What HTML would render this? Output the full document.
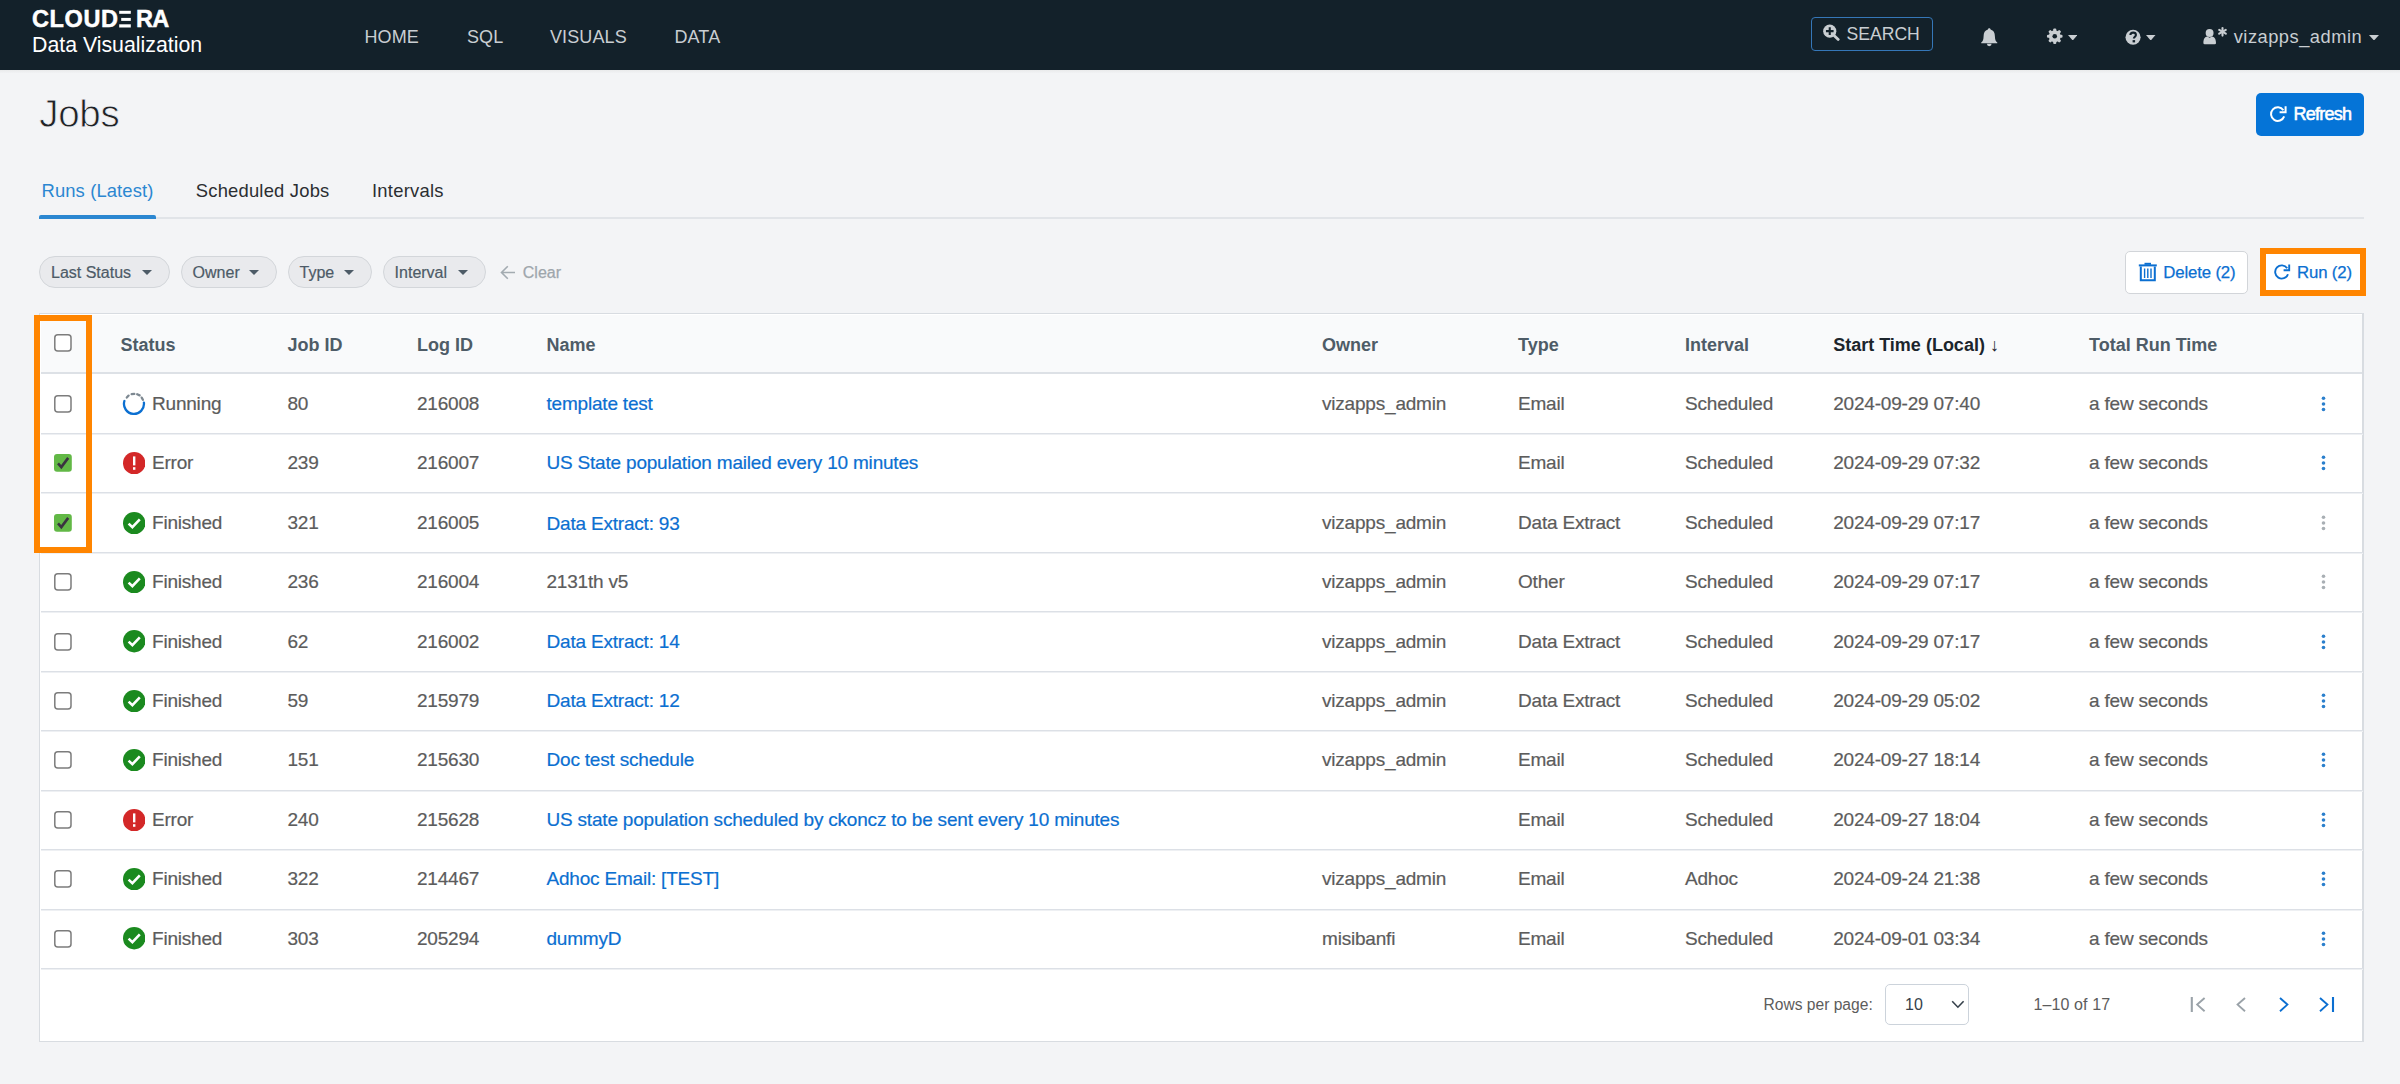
<!DOCTYPE html>
<html><head><meta charset="utf-8"><title>Jobs</title>
<style>
html,body{margin:0;padding:0;}
body{width:2400px;height:1084px;position:relative;overflow:hidden;background:#f3f4f6;font-family:"Liberation Sans", sans-serif;}
.t{position:absolute;white-space:nowrap;line-height:1;}
svg{display:block}
</style></head><body>
<div style="position:absolute;left:0px;top:0px;width:2400px;height:70px;background:#13212a"></div>
<div style="position:absolute;left:0px;top:70px;width:2400px;height:3px;background:linear-gradient(#e9eaeb,#f1f2f4)"></div>
<div class="t" style="left:32.00px;top:7.61px;font-size:23.5px;color:#ffffff;font-weight:700;letter-spacing:0.6px;-webkit-text-stroke:0.5px #fff;">CLOUD</div>
<svg style="position:absolute;left:118px;top:10px" width="14" height="18" viewBox="0 0 14 18"><rect x="1.2" y="0.8" width="11.6" height="3" fill="#fff"/><rect x="3.2" y="7.9" width="9.6" height="3" fill="#fff"/><rect x="1.2" y="14.3" width="11.6" height="3.2" fill="#fff"/></svg>
<div class="t" style="left:136.00px;top:7.61px;font-size:23.5px;color:#ffffff;font-weight:700;letter-spacing:-0.6px;-webkit-text-stroke:0.5px #fff;">RA</div>
<div class="t" style="left:32.00px;top:35.27px;font-size:21.3px;color:#ffffff;font-weight:400;letter-spacing:0px;">Data Visualization</div>
<div class="t" style="left:364.50px;top:28.06px;font-size:18px;color:#c9ced2;font-weight:400;letter-spacing:0.1px;">HOME</div>
<div class="t" style="left:467.00px;top:28.06px;font-size:18px;color:#c9ced2;font-weight:400;letter-spacing:0.1px;">SQL</div>
<div class="t" style="left:550.00px;top:28.06px;font-size:18px;color:#c9ced2;font-weight:400;letter-spacing:0.1px;">VISUALS</div>
<div class="t" style="left:674.50px;top:28.06px;font-size:18px;color:#c9ced2;font-weight:400;letter-spacing:0.1px;">DATA</div>
<div style="position:absolute;left:1811px;top:17px;width:122px;height:34px;box-sizing:border-box;border:1.7px solid #3577b8;border-radius:4px"></div>
<svg style="position:absolute;left:1822px;top:24px" width="19" height="17" viewBox="0 0 19 17"><circle cx="7.75" cy="7.15" r="6.6" fill="#c9ced2"/><path d="M11.8 11.2 L16.2 15.4" stroke="#c9ced2" stroke-width="2.8" stroke-linecap="round"/><path d="M7.75 3.3 V11 M3.95 7.15 H11.6" stroke="#13212a" stroke-width="2.1"/></svg>
<div class="t" style="left:1846.50px;top:26.10px;font-size:17.6px;color:#c9ced2;font-weight:400;letter-spacing:0px;">SEARCH</div>
<svg style="position:absolute;left:1980px;top:27px" width="19" height="20" viewBox="0 0 19 20"><path d="M9.25 1.2 C10.2 1.2 10.6 1.9 10.6 2.6 C13.6 3.3 14.8 6 14.9 9.2 C15 12.5 15.6 14.2 17.3 15.6 L17.3 16.3 L1.2 16.3 L1.2 15.6 C2.9 14.2 3.5 12.5 3.6 9.2 C3.7 6 4.9 3.3 7.9 2.6 C7.9 1.9 8.3 1.2 9.25 1.2 Z" fill="#c9ced2"/><path d="M6.9 16.8 A2.35 2.35 0 0 0 11.6 16.8 Z" fill="#c9ced2"/></svg>
<svg style="position:absolute;left:2046px;top:28px" width="18" height="17" viewBox="0 0 18 17"><g transform="translate(8.75,8.25)" fill="#c9ced2"><rect x="-1.55" y="-7.8" width="3.1" height="4" rx="1.1" transform="rotate(0)"/><rect x="-1.55" y="-7.8" width="3.1" height="4" rx="1.1" transform="rotate(45)"/><rect x="-1.55" y="-7.8" width="3.1" height="4" rx="1.1" transform="rotate(90)"/><rect x="-1.55" y="-7.8" width="3.1" height="4" rx="1.1" transform="rotate(135)"/><rect x="-1.55" y="-7.8" width="3.1" height="4" rx="1.1" transform="rotate(180)"/><rect x="-1.55" y="-7.8" width="3.1" height="4" rx="1.1" transform="rotate(225)"/><rect x="-1.55" y="-7.8" width="3.1" height="4" rx="1.1" transform="rotate(270)"/><rect x="-1.55" y="-7.8" width="3.1" height="4" rx="1.1" transform="rotate(315)"/><circle r="5.9"/><circle r="2.3" fill="#13212a"/></g></svg>
<svg style="position:absolute;left:2067.5px;top:34.5px" width="9.5" height="5.5" viewBox="0 0 9.5 5.5"><path d="M0 0 H9.5 L4.75 5.5 Z" fill="#c9ced2"/></svg>
<svg style="position:absolute;left:2125px;top:28.5px" width="17" height="17" viewBox="0 0 17 17"><circle cx="8.05" cy="8.25" r="7.55" fill="#c9ced2"/><path d="M5.4 6.1 C5.4 4.5 6.5 3.6 8.2 3.6 C9.9 3.6 10.9 4.6 10.9 5.9 C10.9 7.7 8.9 7.8 8.9 9.6" stroke="#13212a" stroke-width="2.1" fill="none"/><rect x="7.6" y="11.1" width="2.5" height="2.3" fill="#13212a"/></svg>
<svg style="position:absolute;left:2146.2px;top:34.5px" width="9.5" height="5.5" viewBox="0 0 9.5 5.5"><path d="M0 0 H9.5 L4.75 5.5 Z" fill="#c9ced2"/></svg>
<svg style="position:absolute;left:2202px;top:26px" width="27" height="20" viewBox="0 0 27 20"><circle cx="7.6" cy="7" r="3.95" fill="#c9ced2"/><path d="M1.4 17 C1.4 12.6 3 10.8 5.3 10.5 L7.6 11.7 L9.9 10.5 C12.2 10.8 14 12.6 14 17 Q14 18.3 12.7 18.3 L2.7 18.3 Q1.4 18.3 1.4 17 Z" fill="#c9ced2"/><g transform="translate(20.5,5.8)" stroke="#c9ced2" stroke-width="2.1" stroke-linecap="round"><path d="M0 -3.8 V3.8"/><path d="M-3.3 -1.9 L3.3 1.9"/><path d="M-3.3 1.9 L3.3 -1.9"/></g></svg>
<div class="t" style="left:2233.70px;top:27.51px;font-size:18.3px;color:#c9ced2;font-weight:400;letter-spacing:0.5px;">vizapps_admin</div>
<svg style="position:absolute;left:2368.5px;top:34.5px" width="10" height="5.5" viewBox="0 0 10 5.5"><path d="M0 0 H10 L5.0 5.5 Z" fill="#c9ced2"/></svg>
<div class="t" style="left:39.30px;top:95.21px;font-size:38.5px;color:#1f2226;font-weight:400;letter-spacing:-0.3px;-webkit-text-stroke:0.8px #f3f4f6;">Jobs</div>
<div style="position:absolute;left:2255.5px;top:92.5px;width:108.5px;height:43.5px;background:#0574d7;border-radius:5px"></div>
<svg style="position:absolute;left:2269px;top:105px" width="19" height="19" viewBox="0 0 19 19"><path d="M15.2 11.4 A6.8 6.8 0 1 1 14.4 5.2" stroke="#fff" stroke-width="2" fill="none"/><path d="M16.6 1.2 V7.2 H10.6" stroke="#fff" stroke-width="2" fill="none"/></svg>
<div class="t" style="left:2293.50px;top:104.76px;font-size:18px;color:#ffffff;font-weight:400;letter-spacing:-0.75px;-webkit-text-stroke:0.55px #fff;">Refresh</div>
<div class="t" style="left:41.50px;top:181.62px;font-size:18.4px;color:#2b87d1;font-weight:400;letter-spacing:0.12px;">Runs (Latest)</div>
<div class="t" style="left:195.80px;top:181.62px;font-size:18.4px;color:#2b2e31;font-weight:400;letter-spacing:0.2px;">Scheduled Jobs</div>
<div class="t" style="left:372.00px;top:181.62px;font-size:18.4px;color:#2b2e31;font-weight:400;letter-spacing:0.25px;">Intervals</div>
<div style="position:absolute;left:39px;top:217px;width:2325px;height:2px;background:#e1e4e8"></div>
<div style="position:absolute;left:39px;top:214.7px;width:117px;height:4.2px;background:#2b87d1;border-radius:2px 2px 0 0"></div>
<div style="position:absolute;left:39.2px;top:256.4px;width:130.6px;height:32px;box-sizing:border-box;background:#e9eaed;border:1.2px solid #d3d6da;border-radius:16px"></div>
<div class="t" style="left:51.00px;top:264.76px;font-size:16px;color:#4d5b67;font-weight:400;letter-spacing:0px;-webkit-text-stroke:0.2px #4d5b67;">Last Status</div>
<svg style="position:absolute;left:142.0px;top:270px" width="10" height="5" viewBox="0 0 10 5"><path d="M0 0 H10 L5.0 5 Z" fill="#4d5b67"/></svg>
<div style="position:absolute;left:181.1px;top:256.4px;width:95.9px;height:32px;box-sizing:border-box;background:#e9eaed;border:1.2px solid #d3d6da;border-radius:16px"></div>
<div class="t" style="left:192.60px;top:264.76px;font-size:16px;color:#4d5b67;font-weight:400;letter-spacing:0px;-webkit-text-stroke:0.2px #4d5b67;">Owner</div>
<svg style="position:absolute;left:248.70000000000002px;top:270px" width="10" height="5" viewBox="0 0 10 5"><path d="M0 0 H10 L5.0 5 Z" fill="#4d5b67"/></svg>
<div style="position:absolute;left:288.1px;top:256.4px;width:83.8px;height:32px;box-sizing:border-box;background:#e9eaed;border:1.2px solid #d3d6da;border-radius:16px"></div>
<div class="t" style="left:299.50px;top:264.76px;font-size:16px;color:#4d5b67;font-weight:400;letter-spacing:0px;-webkit-text-stroke:0.2px #4d5b67;">Type</div>
<svg style="position:absolute;left:343.7px;top:270px" width="10" height="5" viewBox="0 0 10 5"><path d="M0 0 H10 L5.0 5 Z" fill="#4d5b67"/></svg>
<div style="position:absolute;left:383.1px;top:256.4px;width:102.5px;height:32px;box-sizing:border-box;background:#e9eaed;border:1.2px solid #d3d6da;border-radius:16px"></div>
<div class="t" style="left:394.60px;top:264.76px;font-size:16px;color:#4d5b67;font-weight:400;letter-spacing:0px;-webkit-text-stroke:0.2px #4d5b67;">Interval</div>
<svg style="position:absolute;left:457.8px;top:270px" width="10" height="5" viewBox="0 0 10 5"><path d="M0 0 H10 L5.0 5 Z" fill="#4d5b67"/></svg>
<svg style="position:absolute;left:500px;top:265px" width="16" height="15" viewBox="0 0 16 15"><path d="M15 7.5 H1.8 M7.8 1.3 L1.5 7.5 L7.8 13.7" stroke="#a3abb1" stroke-width="1.6" fill="none"/></svg>
<div class="t" style="left:522.80px;top:264.76px;font-size:16px;color:#9ea6ac;font-weight:400;letter-spacing:0px;-webkit-text-stroke:0.25px #9ea6ac;">Clear</div>
<div style="position:absolute;left:2125.3px;top:251.4px;width:122.4px;height:42.6px;box-sizing:border-box;background:#fff;border:1.2px solid #d2d5d9;border-radius:5px"></div>
<svg style="position:absolute;left:2138px;top:262px" width="20" height="20" viewBox="0 0 20 20"><rect x="0.8" y="2.4" width="18" height="2" fill="#0b6fd1"/><rect x="6.5" y="0.8" width="6.5" height="2" fill="#0b6fd1"/><path d="M2.8 4.4 V18.2 H16.8 V4.4" stroke="#0b6fd1" stroke-width="2" fill="none"/><path d="M6.6 6.5 V16 M9.8 6.5 V16 M13 6.5 V16" stroke="#0b6fd1" stroke-width="1.4"/></svg>
<div class="t" style="left:2163.30px;top:265.28px;font-size:16.8px;color:#0b6fd1;font-weight:400;letter-spacing:-0.15px;-webkit-text-stroke:0.25px #0b6fd1;">Delete (2)</div>
<div style="position:absolute;left:2259.6px;top:251.4px;width:105px;height:42px;box-sizing:border-box;background:#fff;border:1.2px solid #d2d5d9;border-radius:5px"></div>
<svg style="position:absolute;left:2272.5px;top:263px" width="19" height="19" viewBox="0 0 19 19"><path d="M15 11.2 A6.6 6.6 0 1 1 14.2 5.2" stroke="#0b6fd1" stroke-width="1.9" fill="none"/><path d="M16.2 1.6 V7.2 H10.6" stroke="#0b6fd1" stroke-width="1.9" fill="none"/></svg>
<div class="t" style="left:2297.00px;top:265.28px;font-size:16.8px;color:#0b6fd1;font-weight:400;letter-spacing:-0.15px;-webkit-text-stroke:0.25px #0b6fd1;">Run (2)</div>
<div style="position:absolute;left:2260.2px;top:247.8px;width:105.9px;height:48.3px;box-sizing:border-box;border:6px solid #ff8500"></div>
<div style="position:absolute;left:39px;top:313px;width:2325px;height:729px;box-sizing:border-box;background:#fff;border:1.5px solid #d8dce1"></div>
<div style="position:absolute;left:40.5px;top:314.5px;width:2322px;height:58.5px;background:#f9fafb"></div>
<div style="position:absolute;left:40.5px;top:372.3px;width:2322px;height:2.1px;background:#dde1e6"></div>
<div style="position:absolute;left:2362px;top:313px;width:2px;height:729px;background:#d8dce1"></div>
<div style="position:absolute;left:40.5px;top:433px;width:2322px;height:1px;background:#dce0e6"></div>
<div style="position:absolute;left:40.5px;top:434px;width:2322px;height:0.6px;background:#eef0f3"></div>
<div style="position:absolute;left:40.5px;top:492px;width:2322px;height:1px;background:#dce0e6"></div>
<div style="position:absolute;left:40.5px;top:493px;width:2322px;height:0.6px;background:#eef0f3"></div>
<div style="position:absolute;left:40.5px;top:552px;width:2322px;height:1px;background:#dce0e6"></div>
<div style="position:absolute;left:40.5px;top:553px;width:2322px;height:0.6px;background:#eef0f3"></div>
<div style="position:absolute;left:40.5px;top:611px;width:2322px;height:1px;background:#dce0e6"></div>
<div style="position:absolute;left:40.5px;top:612px;width:2322px;height:0.6px;background:#eef0f3"></div>
<div style="position:absolute;left:40.5px;top:671px;width:2322px;height:1px;background:#dce0e6"></div>
<div style="position:absolute;left:40.5px;top:672px;width:2322px;height:0.6px;background:#eef0f3"></div>
<div style="position:absolute;left:40.5px;top:730px;width:2322px;height:1px;background:#dce0e6"></div>
<div style="position:absolute;left:40.5px;top:731px;width:2322px;height:0.6px;background:#eef0f3"></div>
<div style="position:absolute;left:40.5px;top:790px;width:2322px;height:1px;background:#dce0e6"></div>
<div style="position:absolute;left:40.5px;top:791px;width:2322px;height:0.6px;background:#eef0f3"></div>
<div style="position:absolute;left:40.5px;top:849px;width:2322px;height:1px;background:#dce0e6"></div>
<div style="position:absolute;left:40.5px;top:850px;width:2322px;height:0.6px;background:#eef0f3"></div>
<div style="position:absolute;left:40.5px;top:909px;width:2322px;height:1px;background:#dce0e6"></div>
<div style="position:absolute;left:40.5px;top:910px;width:2322px;height:0.6px;background:#eef0f3"></div>
<div style="position:absolute;left:40.5px;top:968px;width:2322px;height:1px;background:#dce0e6"></div>
<div style="position:absolute;left:40.5px;top:969px;width:2322px;height:0.6px;background:#eef0f3"></div>
<svg style="position:absolute;left:54.2px;top:334.2px" width="18" height="18" viewBox="0 0 18 18"><rect x="0.8" y="0.8" width="16.2" height="16.2" rx="3" fill="#fff" stroke="#7c7c7c" stroke-width="1.5"/></svg>
<div class="t" style="left:120.50px;top:336.36px;font-size:18px;color:#4e5c67;font-weight:700;letter-spacing:0px;">Status</div>
<div class="t" style="left:287.50px;top:336.36px;font-size:18px;color:#4e5c67;font-weight:700;letter-spacing:0px;">Job ID</div>
<div class="t" style="left:417.00px;top:336.36px;font-size:18px;color:#4e5c67;font-weight:700;letter-spacing:0px;">Log ID</div>
<div class="t" style="left:546.50px;top:336.36px;font-size:18px;color:#4e5c67;font-weight:700;letter-spacing:0px;">Name</div>
<div class="t" style="left:1322.00px;top:336.36px;font-size:18px;color:#4e5c67;font-weight:700;letter-spacing:0px;">Owner</div>
<div class="t" style="left:1518.00px;top:336.36px;font-size:18px;color:#4e5c67;font-weight:700;letter-spacing:0px;">Type</div>
<div class="t" style="left:1685.00px;top:336.36px;font-size:18px;color:#4e5c67;font-weight:700;letter-spacing:0px;">Interval</div>
<div class="t" style="left:1833.20px;top:336.36px;font-size:18px;color:#1c252c;font-weight:700;letter-spacing:0px;">Start Time (Local) ↓</div>
<div class="t" style="left:2089.00px;top:336.36px;font-size:18px;color:#4e5c67;font-weight:700;letter-spacing:0px;">Total Run Time</div>
<svg style="position:absolute;left:54.2px;top:395.0px" width="18" height="18" viewBox="0 0 18 18"><rect x="0.8" y="0.8" width="16.2" height="16.2" rx="3" fill="#fff" stroke="#7c7c7c" stroke-width="1.5"/></svg>
<svg style="position:absolute;left:122px;top:391.9px" width="24" height="24" viewBox="0 0 24 24"><path d="M2.4 9.0 A10 10 0 1 0 21.9 10.7" stroke="#0b6fd1" stroke-width="2.3" fill="none" stroke-linecap="round"/><path d="M4.8 5.6 L6.6 3.6 M9.6 2.2 L12.3 1.8 M15.2 2.3 L17.6 3.4 M19.7 5.6 L20.9 7.7" stroke="#7d8891" stroke-width="2.3" stroke-linecap="round"/></svg>
<div class="t" style="left:152.00px;top:393.92px;font-size:19px;color:#5c5c5c;font-weight:400;letter-spacing:-0.2px;-webkit-text-stroke:0.2px #5c5c5c;">Running</div>
<div class="t" style="left:287.50px;top:393.92px;font-size:19px;color:#5c5c5c;font-weight:400;letter-spacing:-0.2px;-webkit-text-stroke:0.2px #5c5c5c;">80</div>
<div class="t" style="left:417.00px;top:393.92px;font-size:19px;color:#5c5c5c;font-weight:400;letter-spacing:-0.2px;-webkit-text-stroke:0.2px #5c5c5c;">216008</div>
<div class="t" style="left:546.50px;top:393.92px;font-size:19px;color:#0b6fd1;font-weight:400;letter-spacing:-0.2px;-webkit-text-stroke:0.2px #0b6fd1;">template test</div>
<div class="t" style="left:1322.00px;top:393.92px;font-size:19px;color:#5c5c5c;font-weight:400;letter-spacing:-0.2px;-webkit-text-stroke:0.2px #5c5c5c;">vizapps_admin</div>
<div class="t" style="left:1518.00px;top:393.92px;font-size:19px;color:#5c5c5c;font-weight:400;letter-spacing:-0.2px;-webkit-text-stroke:0.2px #5c5c5c;">Email</div>
<div class="t" style="left:1685.00px;top:393.92px;font-size:19px;color:#5c5c5c;font-weight:400;letter-spacing:-0.2px;-webkit-text-stroke:0.2px #5c5c5c;">Scheduled</div>
<div class="t" style="left:1833.20px;top:393.92px;font-size:19px;color:#5c5c5c;font-weight:400;letter-spacing:-0.2px;-webkit-text-stroke:0.2px #5c5c5c;">2024-09-29 07:40</div>
<div class="t" style="left:2089.00px;top:393.92px;font-size:19px;color:#5c5c5c;font-weight:400;letter-spacing:-0.2px;-webkit-text-stroke:0.2px #5c5c5c;">a few seconds</div>
<svg style="position:absolute;left:2321px;top:395.9px" width="5" height="16" viewBox="0 0 5 16"><circle cx="2.5" cy="2.2" r="1.8" fill="#2a7fcc"/><circle cx="2.5" cy="8" r="1.8" fill="#2a7fcc"/><circle cx="2.5" cy="13.5" r="1.8" fill="#2a7fcc"/></svg>
<svg style="position:absolute;left:54.2px;top:454.4px" width="18" height="18" viewBox="0 0 18 18"><rect x="0" y="0" width="17.8" height="17.8" rx="3" fill="#62b846"/><path d="M4 9.4 L7.3 13.1 L14.2 3.9" stroke="#3a3340" stroke-width="2.6" fill="none"/></svg>
<svg style="position:absolute;left:122.8px;top:452.1px" width="22.4" height="22.4" viewBox="0 0 22.4 22.4"><circle cx="11.2" cy="11.2" r="11.2" fill="#d32828"/><rect x="10" y="4.4" width="2.4" height="9" fill="#fff"/><rect x="10" y="15.2" width="2.4" height="2.6" fill="#fff"/></svg>
<div class="t" style="left:152.00px;top:453.32px;font-size:19px;color:#5c5c5c;font-weight:400;letter-spacing:-0.2px;-webkit-text-stroke:0.2px #5c5c5c;">Error</div>
<div class="t" style="left:287.50px;top:453.32px;font-size:19px;color:#5c5c5c;font-weight:400;letter-spacing:-0.2px;-webkit-text-stroke:0.2px #5c5c5c;">239</div>
<div class="t" style="left:417.00px;top:453.32px;font-size:19px;color:#5c5c5c;font-weight:400;letter-spacing:-0.2px;-webkit-text-stroke:0.2px #5c5c5c;">216007</div>
<div class="t" style="left:546.50px;top:453.32px;font-size:19px;color:#0b6fd1;font-weight:400;letter-spacing:-0.2px;-webkit-text-stroke:0.2px #0b6fd1;">US State population mailed every 10 minutes</div>
<div class="t" style="left:1518.00px;top:453.32px;font-size:19px;color:#5c5c5c;font-weight:400;letter-spacing:-0.2px;-webkit-text-stroke:0.2px #5c5c5c;">Email</div>
<div class="t" style="left:1685.00px;top:453.32px;font-size:19px;color:#5c5c5c;font-weight:400;letter-spacing:-0.2px;-webkit-text-stroke:0.2px #5c5c5c;">Scheduled</div>
<div class="t" style="left:1833.20px;top:453.32px;font-size:19px;color:#5c5c5c;font-weight:400;letter-spacing:-0.2px;-webkit-text-stroke:0.2px #5c5c5c;">2024-09-29 07:32</div>
<div class="t" style="left:2089.00px;top:453.32px;font-size:19px;color:#5c5c5c;font-weight:400;letter-spacing:-0.2px;-webkit-text-stroke:0.2px #5c5c5c;">a few seconds</div>
<svg style="position:absolute;left:2321px;top:455.3px" width="5" height="16" viewBox="0 0 5 16"><circle cx="2.5" cy="2.2" r="1.8" fill="#2a7fcc"/><circle cx="2.5" cy="8" r="1.8" fill="#2a7fcc"/><circle cx="2.5" cy="13.5" r="1.8" fill="#2a7fcc"/></svg>
<svg style="position:absolute;left:54.2px;top:513.8px" width="18" height="18" viewBox="0 0 18 18"><rect x="0" y="0" width="17.8" height="17.8" rx="3" fill="#62b846"/><path d="M4 9.4 L7.3 13.1 L14.2 3.9" stroke="#3a3340" stroke-width="2.6" fill="none"/></svg>
<svg style="position:absolute;left:122.8px;top:511.5px" width="22.4" height="22.4" viewBox="0 0 22.4 22.4"><circle cx="11.2" cy="11.2" r="11.2" fill="#1b8a1f"/><path d="M5.6 11.6 L9.4 15.2 L16.8 7.4" stroke="#fff" stroke-width="2.6" fill="none"/></svg>
<div class="t" style="left:152.00px;top:512.72px;font-size:19px;color:#5c5c5c;font-weight:400;letter-spacing:-0.2px;-webkit-text-stroke:0.2px #5c5c5c;">Finished</div>
<div class="t" style="left:287.50px;top:512.72px;font-size:19px;color:#5c5c5c;font-weight:400;letter-spacing:-0.2px;-webkit-text-stroke:0.2px #5c5c5c;">321</div>
<div class="t" style="left:417.00px;top:512.72px;font-size:19px;color:#5c5c5c;font-weight:400;letter-spacing:-0.2px;-webkit-text-stroke:0.2px #5c5c5c;">216005</div>
<div class="t" style="left:546.50px;top:513.52px;font-size:19px;color:#0b6fd1;font-weight:400;letter-spacing:-0.2px;-webkit-text-stroke:0.2px #0b6fd1;">Data Extract: 93</div>
<div class="t" style="left:1322.00px;top:512.72px;font-size:19px;color:#5c5c5c;font-weight:400;letter-spacing:-0.2px;-webkit-text-stroke:0.2px #5c5c5c;">vizapps_admin</div>
<div class="t" style="left:1518.00px;top:512.72px;font-size:19px;color:#5c5c5c;font-weight:400;letter-spacing:-0.2px;-webkit-text-stroke:0.2px #5c5c5c;">Data Extract</div>
<div class="t" style="left:1685.00px;top:512.72px;font-size:19px;color:#5c5c5c;font-weight:400;letter-spacing:-0.2px;-webkit-text-stroke:0.2px #5c5c5c;">Scheduled</div>
<div class="t" style="left:1833.20px;top:512.72px;font-size:19px;color:#5c5c5c;font-weight:400;letter-spacing:-0.2px;-webkit-text-stroke:0.2px #5c5c5c;">2024-09-29 07:17</div>
<div class="t" style="left:2089.00px;top:512.72px;font-size:19px;color:#5c5c5c;font-weight:400;letter-spacing:-0.2px;-webkit-text-stroke:0.2px #5c5c5c;">a few seconds</div>
<svg style="position:absolute;left:2321px;top:514.7px" width="5" height="16" viewBox="0 0 5 16"><circle cx="2.5" cy="2.2" r="1.8" fill="#a9afb4"/><circle cx="2.5" cy="8" r="1.8" fill="#a9afb4"/><circle cx="2.5" cy="13.5" r="1.8" fill="#a9afb4"/></svg>
<svg style="position:absolute;left:54.2px;top:573.2px" width="18" height="18" viewBox="0 0 18 18"><rect x="0.8" y="0.8" width="16.2" height="16.2" rx="3" fill="#fff" stroke="#7c7c7c" stroke-width="1.5"/></svg>
<svg style="position:absolute;left:122.8px;top:570.9px" width="22.4" height="22.4" viewBox="0 0 22.4 22.4"><circle cx="11.2" cy="11.2" r="11.2" fill="#1b8a1f"/><path d="M5.6 11.6 L9.4 15.2 L16.8 7.4" stroke="#fff" stroke-width="2.6" fill="none"/></svg>
<div class="t" style="left:152.00px;top:572.12px;font-size:19px;color:#5c5c5c;font-weight:400;letter-spacing:-0.2px;-webkit-text-stroke:0.2px #5c5c5c;">Finished</div>
<div class="t" style="left:287.50px;top:572.12px;font-size:19px;color:#5c5c5c;font-weight:400;letter-spacing:-0.2px;-webkit-text-stroke:0.2px #5c5c5c;">236</div>
<div class="t" style="left:417.00px;top:572.12px;font-size:19px;color:#5c5c5c;font-weight:400;letter-spacing:-0.2px;-webkit-text-stroke:0.2px #5c5c5c;">216004</div>
<div class="t" style="left:546.50px;top:572.12px;font-size:19px;color:#5c5c5c;font-weight:400;letter-spacing:-0.2px;-webkit-text-stroke:0.2px #5c5c5c;">2131th v5</div>
<div class="t" style="left:1322.00px;top:572.12px;font-size:19px;color:#5c5c5c;font-weight:400;letter-spacing:-0.2px;-webkit-text-stroke:0.2px #5c5c5c;">vizapps_admin</div>
<div class="t" style="left:1518.00px;top:572.12px;font-size:19px;color:#5c5c5c;font-weight:400;letter-spacing:-0.2px;-webkit-text-stroke:0.2px #5c5c5c;">Other</div>
<div class="t" style="left:1685.00px;top:572.12px;font-size:19px;color:#5c5c5c;font-weight:400;letter-spacing:-0.2px;-webkit-text-stroke:0.2px #5c5c5c;">Scheduled</div>
<div class="t" style="left:1833.20px;top:572.12px;font-size:19px;color:#5c5c5c;font-weight:400;letter-spacing:-0.2px;-webkit-text-stroke:0.2px #5c5c5c;">2024-09-29 07:17</div>
<div class="t" style="left:2089.00px;top:572.12px;font-size:19px;color:#5c5c5c;font-weight:400;letter-spacing:-0.2px;-webkit-text-stroke:0.2px #5c5c5c;">a few seconds</div>
<svg style="position:absolute;left:2321px;top:574.1px" width="5" height="16" viewBox="0 0 5 16"><circle cx="2.5" cy="2.2" r="1.8" fill="#a9afb4"/><circle cx="2.5" cy="8" r="1.8" fill="#a9afb4"/><circle cx="2.5" cy="13.5" r="1.8" fill="#a9afb4"/></svg>
<svg style="position:absolute;left:54.2px;top:632.6px" width="18" height="18" viewBox="0 0 18 18"><rect x="0.8" y="0.8" width="16.2" height="16.2" rx="3" fill="#fff" stroke="#7c7c7c" stroke-width="1.5"/></svg>
<svg style="position:absolute;left:122.8px;top:630.3px" width="22.4" height="22.4" viewBox="0 0 22.4 22.4"><circle cx="11.2" cy="11.2" r="11.2" fill="#1b8a1f"/><path d="M5.6 11.6 L9.4 15.2 L16.8 7.4" stroke="#fff" stroke-width="2.6" fill="none"/></svg>
<div class="t" style="left:152.00px;top:631.52px;font-size:19px;color:#5c5c5c;font-weight:400;letter-spacing:-0.2px;-webkit-text-stroke:0.2px #5c5c5c;">Finished</div>
<div class="t" style="left:287.50px;top:631.52px;font-size:19px;color:#5c5c5c;font-weight:400;letter-spacing:-0.2px;-webkit-text-stroke:0.2px #5c5c5c;">62</div>
<div class="t" style="left:417.00px;top:631.52px;font-size:19px;color:#5c5c5c;font-weight:400;letter-spacing:-0.2px;-webkit-text-stroke:0.2px #5c5c5c;">216002</div>
<div class="t" style="left:546.50px;top:631.52px;font-size:19px;color:#0b6fd1;font-weight:400;letter-spacing:-0.2px;-webkit-text-stroke:0.2px #0b6fd1;">Data Extract: 14</div>
<div class="t" style="left:1322.00px;top:631.52px;font-size:19px;color:#5c5c5c;font-weight:400;letter-spacing:-0.2px;-webkit-text-stroke:0.2px #5c5c5c;">vizapps_admin</div>
<div class="t" style="left:1518.00px;top:631.52px;font-size:19px;color:#5c5c5c;font-weight:400;letter-spacing:-0.2px;-webkit-text-stroke:0.2px #5c5c5c;">Data Extract</div>
<div class="t" style="left:1685.00px;top:631.52px;font-size:19px;color:#5c5c5c;font-weight:400;letter-spacing:-0.2px;-webkit-text-stroke:0.2px #5c5c5c;">Scheduled</div>
<div class="t" style="left:1833.20px;top:631.52px;font-size:19px;color:#5c5c5c;font-weight:400;letter-spacing:-0.2px;-webkit-text-stroke:0.2px #5c5c5c;">2024-09-29 07:17</div>
<div class="t" style="left:2089.00px;top:631.52px;font-size:19px;color:#5c5c5c;font-weight:400;letter-spacing:-0.2px;-webkit-text-stroke:0.2px #5c5c5c;">a few seconds</div>
<svg style="position:absolute;left:2321px;top:633.5px" width="5" height="16" viewBox="0 0 5 16"><circle cx="2.5" cy="2.2" r="1.8" fill="#2a7fcc"/><circle cx="2.5" cy="8" r="1.8" fill="#2a7fcc"/><circle cx="2.5" cy="13.5" r="1.8" fill="#2a7fcc"/></svg>
<svg style="position:absolute;left:54.2px;top:692.0px" width="18" height="18" viewBox="0 0 18 18"><rect x="0.8" y="0.8" width="16.2" height="16.2" rx="3" fill="#fff" stroke="#7c7c7c" stroke-width="1.5"/></svg>
<svg style="position:absolute;left:122.8px;top:689.7px" width="22.4" height="22.4" viewBox="0 0 22.4 22.4"><circle cx="11.2" cy="11.2" r="11.2" fill="#1b8a1f"/><path d="M5.6 11.6 L9.4 15.2 L16.8 7.4" stroke="#fff" stroke-width="2.6" fill="none"/></svg>
<div class="t" style="left:152.00px;top:690.92px;font-size:19px;color:#5c5c5c;font-weight:400;letter-spacing:-0.2px;-webkit-text-stroke:0.2px #5c5c5c;">Finished</div>
<div class="t" style="left:287.50px;top:690.92px;font-size:19px;color:#5c5c5c;font-weight:400;letter-spacing:-0.2px;-webkit-text-stroke:0.2px #5c5c5c;">59</div>
<div class="t" style="left:417.00px;top:690.92px;font-size:19px;color:#5c5c5c;font-weight:400;letter-spacing:-0.2px;-webkit-text-stroke:0.2px #5c5c5c;">215979</div>
<div class="t" style="left:546.50px;top:690.92px;font-size:19px;color:#0b6fd1;font-weight:400;letter-spacing:-0.2px;-webkit-text-stroke:0.2px #0b6fd1;">Data Extract: 12</div>
<div class="t" style="left:1322.00px;top:690.92px;font-size:19px;color:#5c5c5c;font-weight:400;letter-spacing:-0.2px;-webkit-text-stroke:0.2px #5c5c5c;">vizapps_admin</div>
<div class="t" style="left:1518.00px;top:690.92px;font-size:19px;color:#5c5c5c;font-weight:400;letter-spacing:-0.2px;-webkit-text-stroke:0.2px #5c5c5c;">Data Extract</div>
<div class="t" style="left:1685.00px;top:690.92px;font-size:19px;color:#5c5c5c;font-weight:400;letter-spacing:-0.2px;-webkit-text-stroke:0.2px #5c5c5c;">Scheduled</div>
<div class="t" style="left:1833.20px;top:690.92px;font-size:19px;color:#5c5c5c;font-weight:400;letter-spacing:-0.2px;-webkit-text-stroke:0.2px #5c5c5c;">2024-09-29 05:02</div>
<div class="t" style="left:2089.00px;top:690.92px;font-size:19px;color:#5c5c5c;font-weight:400;letter-spacing:-0.2px;-webkit-text-stroke:0.2px #5c5c5c;">a few seconds</div>
<svg style="position:absolute;left:2321px;top:692.9px" width="5" height="16" viewBox="0 0 5 16"><circle cx="2.5" cy="2.2" r="1.8" fill="#2a7fcc"/><circle cx="2.5" cy="8" r="1.8" fill="#2a7fcc"/><circle cx="2.5" cy="13.5" r="1.8" fill="#2a7fcc"/></svg>
<svg style="position:absolute;left:54.2px;top:751.4px" width="18" height="18" viewBox="0 0 18 18"><rect x="0.8" y="0.8" width="16.2" height="16.2" rx="3" fill="#fff" stroke="#7c7c7c" stroke-width="1.5"/></svg>
<svg style="position:absolute;left:122.8px;top:749.1px" width="22.4" height="22.4" viewBox="0 0 22.4 22.4"><circle cx="11.2" cy="11.2" r="11.2" fill="#1b8a1f"/><path d="M5.6 11.6 L9.4 15.2 L16.8 7.4" stroke="#fff" stroke-width="2.6" fill="none"/></svg>
<div class="t" style="left:152.00px;top:750.32px;font-size:19px;color:#5c5c5c;font-weight:400;letter-spacing:-0.2px;-webkit-text-stroke:0.2px #5c5c5c;">Finished</div>
<div class="t" style="left:287.50px;top:750.32px;font-size:19px;color:#5c5c5c;font-weight:400;letter-spacing:-0.2px;-webkit-text-stroke:0.2px #5c5c5c;">151</div>
<div class="t" style="left:417.00px;top:750.32px;font-size:19px;color:#5c5c5c;font-weight:400;letter-spacing:-0.2px;-webkit-text-stroke:0.2px #5c5c5c;">215630</div>
<div class="t" style="left:546.50px;top:750.32px;font-size:19px;color:#0b6fd1;font-weight:400;letter-spacing:-0.2px;-webkit-text-stroke:0.2px #0b6fd1;">Doc test schedule</div>
<div class="t" style="left:1322.00px;top:750.32px;font-size:19px;color:#5c5c5c;font-weight:400;letter-spacing:-0.2px;-webkit-text-stroke:0.2px #5c5c5c;">vizapps_admin</div>
<div class="t" style="left:1518.00px;top:750.32px;font-size:19px;color:#5c5c5c;font-weight:400;letter-spacing:-0.2px;-webkit-text-stroke:0.2px #5c5c5c;">Email</div>
<div class="t" style="left:1685.00px;top:750.32px;font-size:19px;color:#5c5c5c;font-weight:400;letter-spacing:-0.2px;-webkit-text-stroke:0.2px #5c5c5c;">Scheduled</div>
<div class="t" style="left:1833.20px;top:750.32px;font-size:19px;color:#5c5c5c;font-weight:400;letter-spacing:-0.2px;-webkit-text-stroke:0.2px #5c5c5c;">2024-09-27 18:14</div>
<div class="t" style="left:2089.00px;top:750.32px;font-size:19px;color:#5c5c5c;font-weight:400;letter-spacing:-0.2px;-webkit-text-stroke:0.2px #5c5c5c;">a few seconds</div>
<svg style="position:absolute;left:2321px;top:752.3px" width="5" height="16" viewBox="0 0 5 16"><circle cx="2.5" cy="2.2" r="1.8" fill="#2a7fcc"/><circle cx="2.5" cy="8" r="1.8" fill="#2a7fcc"/><circle cx="2.5" cy="13.5" r="1.8" fill="#2a7fcc"/></svg>
<svg style="position:absolute;left:54.2px;top:810.8px" width="18" height="18" viewBox="0 0 18 18"><rect x="0.8" y="0.8" width="16.2" height="16.2" rx="3" fill="#fff" stroke="#7c7c7c" stroke-width="1.5"/></svg>
<svg style="position:absolute;left:122.8px;top:808.5px" width="22.4" height="22.4" viewBox="0 0 22.4 22.4"><circle cx="11.2" cy="11.2" r="11.2" fill="#d32828"/><rect x="10" y="4.4" width="2.4" height="9" fill="#fff"/><rect x="10" y="15.2" width="2.4" height="2.6" fill="#fff"/></svg>
<div class="t" style="left:152.00px;top:809.72px;font-size:19px;color:#5c5c5c;font-weight:400;letter-spacing:-0.2px;-webkit-text-stroke:0.2px #5c5c5c;">Error</div>
<div class="t" style="left:287.50px;top:809.72px;font-size:19px;color:#5c5c5c;font-weight:400;letter-spacing:-0.2px;-webkit-text-stroke:0.2px #5c5c5c;">240</div>
<div class="t" style="left:417.00px;top:809.72px;font-size:19px;color:#5c5c5c;font-weight:400;letter-spacing:-0.2px;-webkit-text-stroke:0.2px #5c5c5c;">215628</div>
<div class="t" style="left:546.50px;top:809.72px;font-size:19px;color:#0b6fd1;font-weight:400;letter-spacing:-0.2px;-webkit-text-stroke:0.2px #0b6fd1;">US state population scheduled by ckoncz to be sent every 10 minutes</div>
<div class="t" style="left:1518.00px;top:809.72px;font-size:19px;color:#5c5c5c;font-weight:400;letter-spacing:-0.2px;-webkit-text-stroke:0.2px #5c5c5c;">Email</div>
<div class="t" style="left:1685.00px;top:809.72px;font-size:19px;color:#5c5c5c;font-weight:400;letter-spacing:-0.2px;-webkit-text-stroke:0.2px #5c5c5c;">Scheduled</div>
<div class="t" style="left:1833.20px;top:809.72px;font-size:19px;color:#5c5c5c;font-weight:400;letter-spacing:-0.2px;-webkit-text-stroke:0.2px #5c5c5c;">2024-09-27 18:04</div>
<div class="t" style="left:2089.00px;top:809.72px;font-size:19px;color:#5c5c5c;font-weight:400;letter-spacing:-0.2px;-webkit-text-stroke:0.2px #5c5c5c;">a few seconds</div>
<svg style="position:absolute;left:2321px;top:811.7px" width="5" height="16" viewBox="0 0 5 16"><circle cx="2.5" cy="2.2" r="1.8" fill="#2a7fcc"/><circle cx="2.5" cy="8" r="1.8" fill="#2a7fcc"/><circle cx="2.5" cy="13.5" r="1.8" fill="#2a7fcc"/></svg>
<svg style="position:absolute;left:54.2px;top:870.2px" width="18" height="18" viewBox="0 0 18 18"><rect x="0.8" y="0.8" width="16.2" height="16.2" rx="3" fill="#fff" stroke="#7c7c7c" stroke-width="1.5"/></svg>
<svg style="position:absolute;left:122.8px;top:867.9px" width="22.4" height="22.4" viewBox="0 0 22.4 22.4"><circle cx="11.2" cy="11.2" r="11.2" fill="#1b8a1f"/><path d="M5.6 11.6 L9.4 15.2 L16.8 7.4" stroke="#fff" stroke-width="2.6" fill="none"/></svg>
<div class="t" style="left:152.00px;top:869.12px;font-size:19px;color:#5c5c5c;font-weight:400;letter-spacing:-0.2px;-webkit-text-stroke:0.2px #5c5c5c;">Finished</div>
<div class="t" style="left:287.50px;top:869.12px;font-size:19px;color:#5c5c5c;font-weight:400;letter-spacing:-0.2px;-webkit-text-stroke:0.2px #5c5c5c;">322</div>
<div class="t" style="left:417.00px;top:869.12px;font-size:19px;color:#5c5c5c;font-weight:400;letter-spacing:-0.2px;-webkit-text-stroke:0.2px #5c5c5c;">214467</div>
<div class="t" style="left:546.50px;top:869.12px;font-size:19px;color:#0b6fd1;font-weight:400;letter-spacing:-0.2px;-webkit-text-stroke:0.2px #0b6fd1;">Adhoc Email: [TEST]</div>
<div class="t" style="left:1322.00px;top:869.12px;font-size:19px;color:#5c5c5c;font-weight:400;letter-spacing:-0.2px;-webkit-text-stroke:0.2px #5c5c5c;">vizapps_admin</div>
<div class="t" style="left:1518.00px;top:869.12px;font-size:19px;color:#5c5c5c;font-weight:400;letter-spacing:-0.2px;-webkit-text-stroke:0.2px #5c5c5c;">Email</div>
<div class="t" style="left:1685.00px;top:869.12px;font-size:19px;color:#5c5c5c;font-weight:400;letter-spacing:-0.2px;-webkit-text-stroke:0.2px #5c5c5c;">Adhoc</div>
<div class="t" style="left:1833.20px;top:869.12px;font-size:19px;color:#5c5c5c;font-weight:400;letter-spacing:-0.2px;-webkit-text-stroke:0.2px #5c5c5c;">2024-09-24 21:38</div>
<div class="t" style="left:2089.00px;top:869.12px;font-size:19px;color:#5c5c5c;font-weight:400;letter-spacing:-0.2px;-webkit-text-stroke:0.2px #5c5c5c;">a few seconds</div>
<svg style="position:absolute;left:2321px;top:871.1px" width="5" height="16" viewBox="0 0 5 16"><circle cx="2.5" cy="2.2" r="1.8" fill="#2a7fcc"/><circle cx="2.5" cy="8" r="1.8" fill="#2a7fcc"/><circle cx="2.5" cy="13.5" r="1.8" fill="#2a7fcc"/></svg>
<svg style="position:absolute;left:54.2px;top:929.6px" width="18" height="18" viewBox="0 0 18 18"><rect x="0.8" y="0.8" width="16.2" height="16.2" rx="3" fill="#fff" stroke="#7c7c7c" stroke-width="1.5"/></svg>
<svg style="position:absolute;left:122.8px;top:927.3px" width="22.4" height="22.4" viewBox="0 0 22.4 22.4"><circle cx="11.2" cy="11.2" r="11.2" fill="#1b8a1f"/><path d="M5.6 11.6 L9.4 15.2 L16.8 7.4" stroke="#fff" stroke-width="2.6" fill="none"/></svg>
<div class="t" style="left:152.00px;top:928.52px;font-size:19px;color:#5c5c5c;font-weight:400;letter-spacing:-0.2px;-webkit-text-stroke:0.2px #5c5c5c;">Finished</div>
<div class="t" style="left:287.50px;top:928.52px;font-size:19px;color:#5c5c5c;font-weight:400;letter-spacing:-0.2px;-webkit-text-stroke:0.2px #5c5c5c;">303</div>
<div class="t" style="left:417.00px;top:928.52px;font-size:19px;color:#5c5c5c;font-weight:400;letter-spacing:-0.2px;-webkit-text-stroke:0.2px #5c5c5c;">205294</div>
<div class="t" style="left:546.50px;top:928.52px;font-size:19px;color:#0b6fd1;font-weight:400;letter-spacing:-0.2px;-webkit-text-stroke:0.2px #0b6fd1;">dummyD</div>
<div class="t" style="left:1322.00px;top:928.52px;font-size:19px;color:#5c5c5c;font-weight:400;letter-spacing:-0.2px;-webkit-text-stroke:0.2px #5c5c5c;">misibanfi</div>
<div class="t" style="left:1518.00px;top:928.52px;font-size:19px;color:#5c5c5c;font-weight:400;letter-spacing:-0.2px;-webkit-text-stroke:0.2px #5c5c5c;">Email</div>
<div class="t" style="left:1685.00px;top:928.52px;font-size:19px;color:#5c5c5c;font-weight:400;letter-spacing:-0.2px;-webkit-text-stroke:0.2px #5c5c5c;">Scheduled</div>
<div class="t" style="left:1833.20px;top:928.52px;font-size:19px;color:#5c5c5c;font-weight:400;letter-spacing:-0.2px;-webkit-text-stroke:0.2px #5c5c5c;">2024-09-01 03:34</div>
<div class="t" style="left:2089.00px;top:928.52px;font-size:19px;color:#5c5c5c;font-weight:400;letter-spacing:-0.2px;-webkit-text-stroke:0.2px #5c5c5c;">a few seconds</div>
<svg style="position:absolute;left:2321px;top:930.5px" width="5" height="16" viewBox="0 0 5 16"><circle cx="2.5" cy="2.2" r="1.8" fill="#2a7fcc"/><circle cx="2.5" cy="8" r="1.8" fill="#2a7fcc"/><circle cx="2.5" cy="13.5" r="1.8" fill="#2a7fcc"/></svg>
<div class="t" style="left:1763.50px;top:996.79px;font-size:15.6px;color:#5c5c5c;font-weight:400;letter-spacing:0px;">Rows per page:</div>
<div style="position:absolute;left:1884.6px;top:984.2px;width:84.7px;height:40.8px;box-sizing:border-box;border:1.5px solid #ccd3db;border-radius:5px;background:#fff"></div>
<div class="t" style="left:1905.00px;top:996.66px;font-size:16px;color:#36414b;font-weight:400;letter-spacing:0px;">10</div>
<svg style="position:absolute;left:1951px;top:1000px" width="14" height="9" viewBox="0 0 14 9"><path d="M1.2 1.2 L6.9 7.2 L12.6 1.2" stroke="#36414b" stroke-width="1.6" fill="none"/></svg>
<div class="t" style="left:2033.50px;top:996.66px;font-size:16px;color:#5c5c5c;font-weight:400;letter-spacing:0.1px;">1–10 of 17</div>
<svg style="position:absolute;left:2189px;top:996px" width="18" height="18" viewBox="0 0 18 18"><path d="M2.8 1 V16" stroke="#9aa2a8" stroke-width="2.1"/><path d="M15.6 2 L8.2 8.6 L15.6 15.2" stroke="#9aa2a8" stroke-width="1.9" fill="none"/></svg>
<svg style="position:absolute;left:2234px;top:996px" width="14" height="18" viewBox="0 0 14 18"><path d="M11 2 L3.6 8.6 L11 15.2" stroke="#9aa2a8" stroke-width="1.9" fill="none"/></svg>
<svg style="position:absolute;left:2277px;top:996px" width="14" height="18" viewBox="0 0 14 18"><path d="M3 2 L10.4 8.6 L3 15.2" stroke="#0b6fd1" stroke-width="1.9" fill="none"/></svg>
<svg style="position:absolute;left:2318px;top:996px" width="18" height="18" viewBox="0 0 18 18"><path d="M2 2 L9.4 8.6 L2 15.2" stroke="#0b6fd1" stroke-width="1.9" fill="none"/><path d="M15 1 V16" stroke="#0b6fd1" stroke-width="2.1"/></svg>
<div style="position:absolute;left:33.8px;top:315px;width:58.2px;height:237.6px;box-sizing:border-box;border:6px solid #ff8500"></div>
</body></html>
